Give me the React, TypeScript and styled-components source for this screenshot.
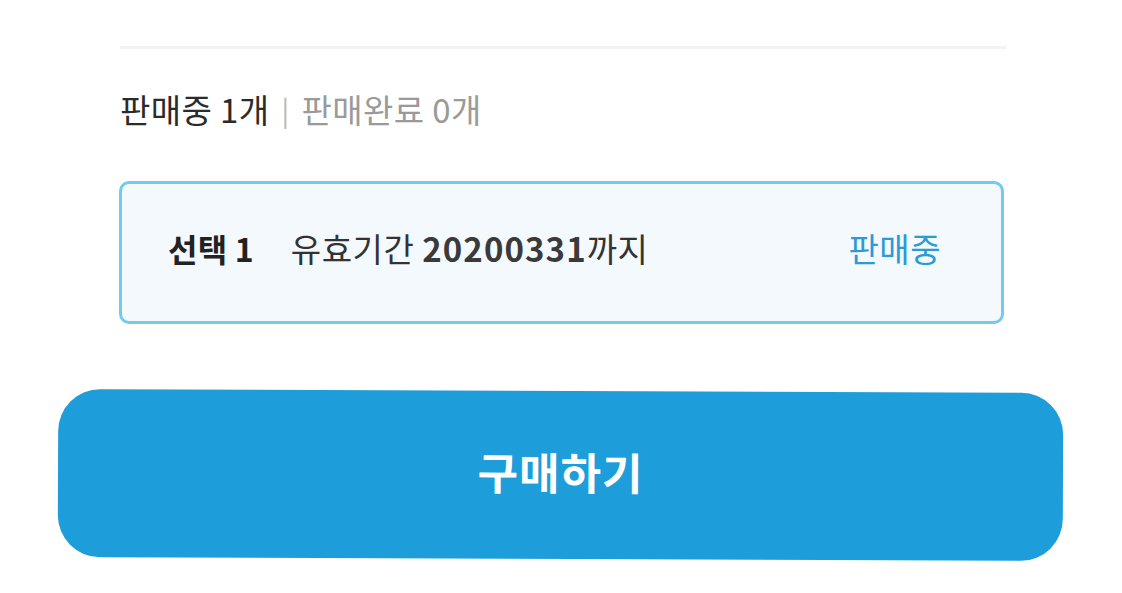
import React from "react";
import styled, { createGlobalStyle } from "styled-components";

const Global = createGlobalStyle`
  html, body { margin: 0; padding: 0; background: #ffffff; }
  body { font-family: "Noto Sans CJK KR", "Noto Sans", sans-serif; }
`;

const Page = styled.div`
  width: 1122px;
  height: 593px;
  overflow: hidden;
  padding-top: 46px;
  box-sizing: border-box;
  display: flex;
  flex-direction: column;
`;

const Divider = styled.div`
  margin-left: 120px;
  width: 886px;
  height: 3px;
  background: #f3f3f3;
`;

const Summary = styled.div`
  margin: 37px 0 0 120px;
  font-size: 33px;
  line-height: 46px;
  letter-spacing: 0.4px;
  color: #9a9a9a;
  display: flex;
  align-items: center;
  gap: 12px;
`;

const Active = styled.span`
  color: #2b2b2b;
`;

const Sep = styled.span`
  color: #b8b8b8;
  font-size: 28px;
`;

const Card = styled.div`
  margin: 49px 0 0 119px;
  width: 885px;
  height: 143px;
  box-sizing: border-box;
  border: 3px solid #74c9f1;
  border-radius: 10px;
  background: #f4f9fd;
  display: flex;
  align-items: center;
  padding: 0 60px 10px 46px;
`;

const Label = styled.span`
  font-weight: 700;
  font-size: 32px;
  color: #222;
  margin-right: 37px;
  letter-spacing: 0.2px;
`;

const Info = styled.span`
  font-size: 33px;
  color: #333;
  flex: 1;
  letter-spacing: 0.5px;
`;

const Bold = styled.b`
  font-weight: 700;
  color: #3a3a3a;
  letter-spacing: 1.1px;
`;

const Status = styled.span`
  font-size: 33px;
  color: #2a9bd6;
  letter-spacing: 0.5px;
`;

const BuyButton = styled.button`
  margin: 67px 0 0 58px;
  width: 1005px;
  height: 168px;
  border: none;
  border-radius: 42px;
  background: #1d9dd9;
  color: #ffffff;
  font-family: "Noto Sans CJK KR", "Noto Sans", sans-serif;
  font-weight: 700;
  font-size: 44px;
  letter-spacing: 1px;
  transform: rotate(0.23deg);
  transform-origin: center;
  display: flex;
  align-items: center;
  justify-content: center;
  padding: 0 0 8px;
`;

export default function App() {
  return (
    <>
      <Global />
      <Page>
        <Divider />
        <Summary>
          <Active>판매중 1개</Active>
          <Sep>|</Sep>
          <span>판매완료 0개</span>
        </Summary>
        <Card>
          <Label>선택 1</Label>
          <Info>
            유효기간 <Bold>20200331</Bold>까지
          </Info>
          <Status>판매중</Status>
        </Card>
        <BuyButton>구매하기</BuyButton>
      </Page>
    </>
  );
}
